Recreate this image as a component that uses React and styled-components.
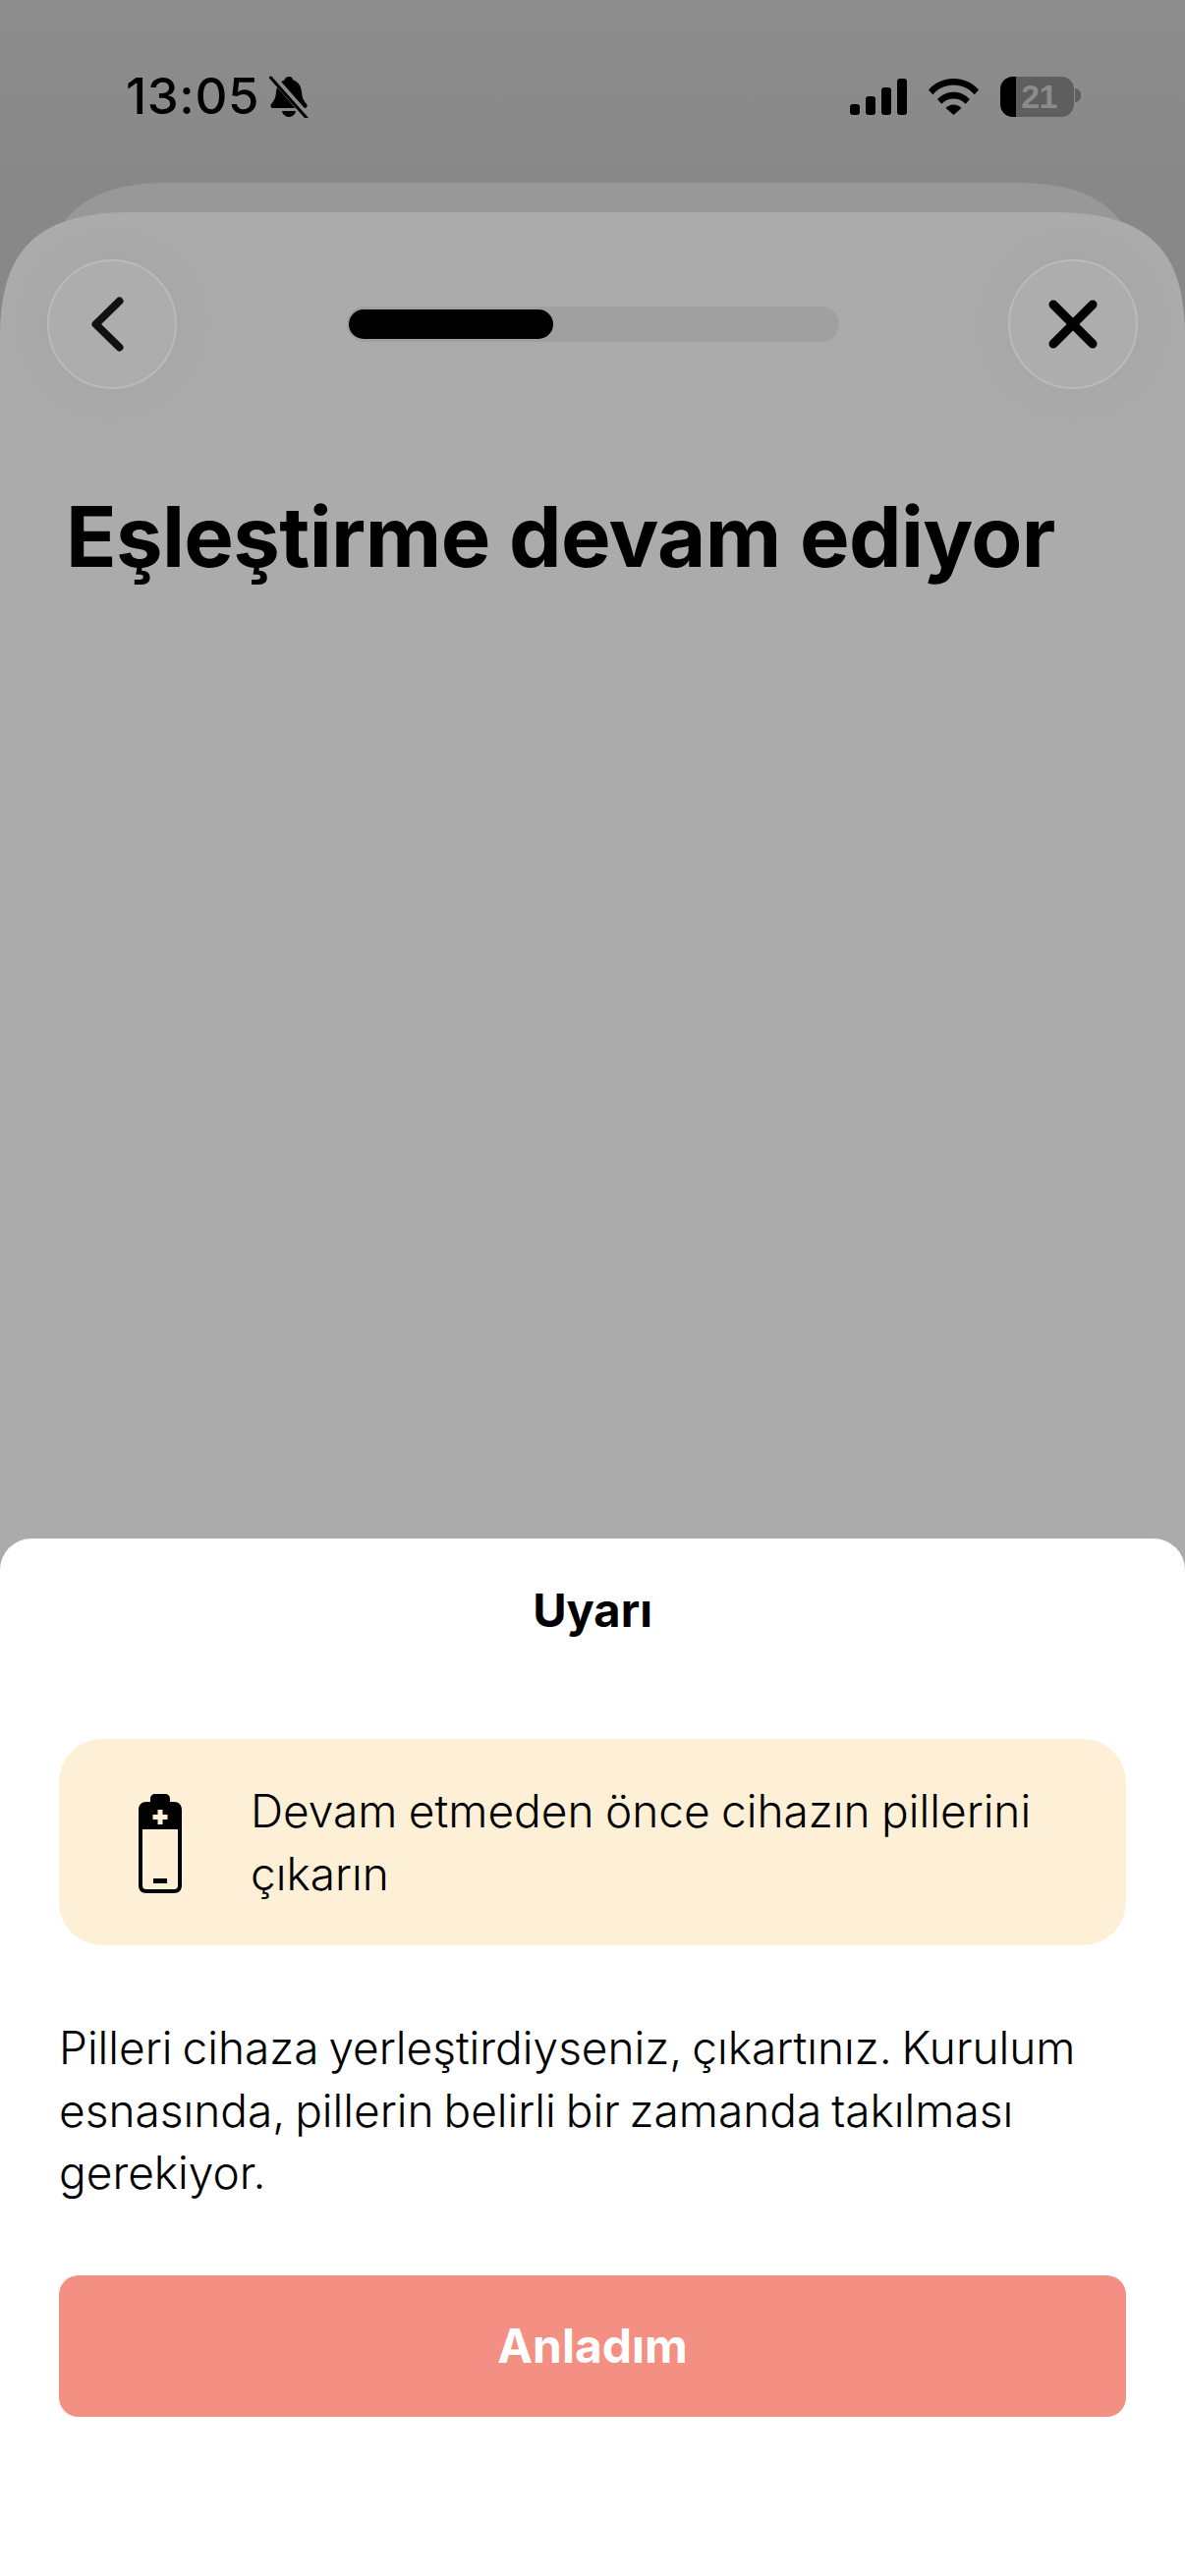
import React from "react";
import styled, { createGlobalStyle } from "styled-components";

const Global = createGlobalStyle`
  html, body { margin: 0; padding: 0; background: #8a8a8a; }
  * { box-sizing: border-box; }
`;

const font = `Inter, "Noto Sans", sans-serif`;

const Screen = styled.div`
  position: relative;
  width: 1206px;
  height: 2622px;
  overflow: hidden;
  display: flex;
  flex-direction: column;
  font-family: ${font};
  color: #000;
  background: linear-gradient(#8d8d8d, #888888 186px);
`;

const StatusBar = styled.div`
  height: 186px;
  flex: none;
  display: flex;
  justify-content: space-between;
  align-items: flex-start;
  padding: 70px 106px 0 128px;
`;

const StatusLeft = styled.div`
  display: flex;
  align-items: center;
  gap: 10px;
  height: 56px;
`;

const Time = styled.span`
  font-size: 51px;
  font-weight: 500;
  line-height: 56px;
  letter-spacing: 0.6px;
`;

const StatusRight = styled.div`
  display: flex;
  align-items: center;
  height: 56px;
  gap: 22px;
`;

const Battery = styled.div`
  position: relative;
  width: 75px;
  height: 41px;
  border-radius: 13px;
  background: #5e5e5e;
  overflow: hidden;
  margin-right: 7px;
  display: flex;
  align-items: center;
  justify-content: flex-end;
  padding-right: 17px;
  font-family: "Liberation Sans", Arial, sans-serif;
  font-weight: 700;
  font-size: 34px;
  color: #8b8b8b;
  letter-spacing: -0.5px;
  &::before {
    content: "";
    position: absolute;
    left: 0;
    top: 0;
    bottom: 0;
    width: 16px;
    background: #000;
  }
`;

const BatteryNub = styled.div`
  position: absolute;
  right: 106px;
  top: 90px;
  width: 6px;
  height: 14px;
  border-radius: 0 7px 7px 0;
  background: #5e5e5e;
`;

const BackCard = styled.div`
  flex: none;
  height: 200px;
  margin: 0 40px -170px;
  clip-path: path("M0 140C0 40 40 0 130 0H996C1086 0 1126 40 1126 140V200H0Z");
  background: #989898;
`;

const FrontCard = styled.div`
  position: relative;
  flex: 1;
  clip-path: path("M0 127C0 38 38 0 133 0H1073C1168 0 1206 38 1206 127V2406H0Z");
  background: #ababab;
  padding: 48px 48px 0;
`;

const Header = styled.div`
  display: flex;
  align-items: center;
  justify-content: space-between;
`;

const RoundButton = styled.button`
  width: 132px;
  height: 132px;
  padding: 0;
  border-radius: 50%;
  background: #adadad;
  border: 2px solid #bababa;
  box-shadow: 0 0 70px rgba(0, 0, 0, 0.035);
  display: flex;
  align-items: center;
  justify-content: center;
`;

const ProgressTrack = styled.div`
  width: 501px;
  height: 36px;
  border-radius: 18px;
  background: #a0a0a0;
  padding: 3px 2px;
`;

const ProgressFill = styled.div`
  height: 30px;
  border-radius: 15px;
  background: #000;
`;

const ChevronSlot = styled.span`
  display: flex;
  margin-right: 9px;
`;

const Title = styled.h1`
  margin: 101px 0 0 19px;
  font-size: 85px;
  font-weight: 700;
  line-height: 100px;
  letter-spacing: -0.65px;
`;

const Sheet = styled.div`
  position: absolute;
  left: 0;
  right: 0;
  bottom: 0;
  height: 1056px;
  background: #fff;
  border-radius: 32px 32px 0 0;
  padding: 42px 60px 0;
`;

const SheetTitle = styled.h2`
  margin: 0;
  text-align: center;
  font-size: 47px;
  font-weight: 700;
  line-height: 62px;
`;

const Callout = styled.div`
  margin-top: 100px;
  height: 210px;
  border-radius: 44px;
  background: #fef0d6;
  display: flex;
  align-items: center;
  padding-left: 80px;
  gap: 69px;
`;

const IconSlot = styled.span`
  display: flex;
  margin-top: 3px;
`;

const CalloutText = styled.div`
  font-size: 46px;
  font-weight: 300;
  line-height: 64px;
  width: 810px;
  word-spacing: -1.5px;
`;

const Body = styled.p`
  margin: 73px 0 0;
  font-size: 46px;
  font-weight: 300;
  line-height: 63.6px;
  word-spacing: -3px;
`;

const PrimaryButton = styled.button`
  display: block;
  width: 100%;
  height: 144px;
  margin-top: 72px;
  border: 0;
  border-radius: 20px;
  background: #f48f83;
  color: #fff;
  font-family: ${font};
  font-size: 48px;
  font-weight: 700;
`;

const BellOff = () => (
  <svg width="40" height="43" viewBox="0 0 40 43">
    <path d="M20 1c2.5 0 4 1.6 4.4 3.6C30 6.5 32.5 11 33 17c.4 5 2 9 5 12 1.2 1.3.6 4-1.6 4H3.6C1.4 33 .8 30.300 2 29c3-3 4.600-7 5-12 .5-6 3-10.500 8.600-12.400C16 2.600 17.500 1 20 1z" />
    <path d="M13 36h14c-.6 3.500-3.400 6-7 6s-6.400-2.500-7-6z" />
    <path d="M3 1l36 41" stroke="#8a8a8a" strokeWidth="7" />
    <path d="M1.500 2l36.500 41" stroke="#000" strokeWidth="3" strokeLinecap="round" />
  </svg>
);

const Signal = () => (
  <svg width="58" height="37" viewBox="0 0 58 37">
    <rect x="0" y="26" width="10" height="11" rx="3" />
    <rect x="16" y="18" width="10" height="19" rx="3" />
    <rect x="32" y="9" width="10" height="28" rx="3" />
    <rect x="48" y="0" width="10" height="37" rx="3" />
  </svg>
);

const Wifi = () => (
  <svg width="51" height="37" viewBox="0 0 51 37">
    <path d="M0 11.500C6.500 4 15.500 0 25.500 0S44.500 4 51 11.500l-4.300 4.800C41 10 33.700 6.600 25.500 6.600S10 10 4.300 16.300z" />
    <path d="M9 21c4.300-4.700 10-7.300 16.500-7.300S37.700 16.300 42 21l-4.300 4.700c-3.200-3.400-7.400-5.300-12.200-5.300s-9 1.900-12.200 5.300z" />
    <path d="M17.500 30c2.100-2.200 4.900-3.400 8-3.400s5.900 1.200 8 3.400l-8 7z" />
  </svg>
);

const Chevron = () => (
  <svg width="33" height="56" viewBox="0 0 33 56" fill="none">
    <path d="M28.500 4.500L4.500 28l24 23.500" stroke="#111" strokeWidth="8" strokeLinecap="round" strokeLinejoin="round" />
  </svg>
);

const Cross = () => (
  <svg width="50" height="50" viewBox="0 0 50 50" fill="none">
    <path d="M5 5l40 40M45 5L5 45" stroke="#000" strokeWidth="9" strokeLinecap="round" />
  </svg>
);

const BatteryIcon = () => (
  <svg width="46" height="104" viewBox="0 0 46 104">
    <path d="M13 9V6c0-3 2-5 5-5h10c3 0 5 2 5 5v3h4c5 0 8 3 8 8v77c0 5-3 8-8 8H9c-5 0-8-3-8-8V17c0-5 3-8 8-8z" />
    <path d="M5 37h36v57c0 3-1.500 4-4 4H9c-2.500 0-4-1-4-4z" fill="#fef0d6" />
    <path d="M20.500 17h5v5h5v5h-5v5h-5v-5h-5v-5h5z" fill="#fef0d6" />
    <rect x="16" y="87" width="14" height="5" />
  </svg>
);

export default function App() {
  return (
    <Screen>
      <Global />
      <StatusBar>
        <StatusLeft>
          <Time>13:05</Time>
          <BellOff />
        </StatusLeft>
        <StatusRight>
          <Signal />
          <Wifi />
          <Battery>21</Battery>
        </StatusRight>
      </StatusBar>
      <BatteryNub />
      <BackCard />
      <FrontCard>
        <Header>
          <RoundButton aria-label="Geri"><ChevronSlot><Chevron /></ChevronSlot></RoundButton>
          <ProgressTrack>
            <ProgressFill style={{ width: `${(208 / 497) * 100}%` }} />
          </ProgressTrack>
          <RoundButton aria-label="Kapat"><Cross /></RoundButton>
        </Header>
        <Title>Eşleştirme devam ediyor</Title>
      </FrontCard>
      <Sheet>
        <SheetTitle>Uyarı</SheetTitle>
        <Callout>
          <IconSlot><BatteryIcon /></IconSlot>
          <CalloutText>Devam etmeden önce cihazın pillerini çıkarın</CalloutText>
        </Callout>
        <Body>Pilleri cihaza yerleştirdiyseniz, çıkartınız. Kurulum esnasında, pillerin belirli bir zamanda takılması gerekiyor.</Body>
        <PrimaryButton>Anladım</PrimaryButton>
      </Sheet>
    </Screen>
  );
}
